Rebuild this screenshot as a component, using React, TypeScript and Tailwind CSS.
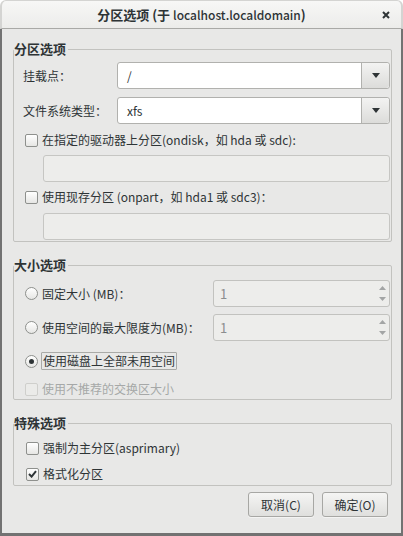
import React from 'react';

const ink = 'text-[#2e3436]';

function Check({ checked = false, disabled = false }: { checked?: boolean; disabled?: boolean }) {
  return (
    <span
      className={`w-[13px] h-[13px] rounded-[2px] border flex items-center justify-center shrink-0 ${
        disabled ? 'border-[#cfcfcc] bg-[#ebebe9]' : 'border-[#8e908d] bg-linear-to-b from-white to-[#e6e6e4]'
      }`}
    >
      {checked && (
        <svg width="9" height="8" viewBox="0 0 9 8">
          <path d="M1 4 L3.6 6.6 L8 1.2" stroke="#2e3436" strokeWidth="2" fill="none" />
        </svg>
      )}
    </span>
  );
}

function Radio({ checked = false }: { checked?: boolean }) {
  return (
    <span className="w-[13px] h-[13px] rounded-full border border-[#8e908d] bg-linear-to-b from-white to-[#e6e6e4] flex items-center justify-center shrink-0">
      {checked && <span className="w-[5px] h-[5px] rounded-full bg-[#2e3436]" />}
    </span>
  );
}

function Combo({ value }: { value: string }) {
  return (
    <div className="flex h-[27px] w-[273px] border border-[#b1b1ae] rounded-[3px] bg-white">
      <div className="flex-1 flex items-center pl-[9px] text-[12px]">{value}</div>
      <div className="w-[28px] border-l border-[#b1b1ae] rounded-r-[3px] bg-linear-to-b from-[#f3f3f2] to-[#dcdcda] flex items-center justify-center">
        <svg width="8" height="5" viewBox="0 0 8 5">
          <path d="M0 0 H8 L4 5 Z" fill="#2e3436" />
        </svg>
      </div>
    </div>
  );
}

function Spin() {
  return (
    <div className="flex h-[27px] w-[177px] border border-[#c2c2bf] rounded-[3px] bg-[#ededeb]">
      <div className="flex-1 flex items-center pl-[6px] text-[13px] text-[#8b8e8f]">1</div>
      <div className="w-[14px] flex flex-col items-center justify-between py-[5px]">
        <svg width="7" height="4" viewBox="0 0 7 4">
          <path d="M0 4 H7 L3.5 0 Z" fill="#a3a5a5" />
        </svg>
        <svg width="7" height="4" viewBox="0 0 7 4">
          <path d="M0 0 H7 L3.5 4 Z" fill="#a3a5a5" />
        </svg>
      </div>
    </div>
  );
}

function Section({ title, children }: { title: string; children: React.ReactNode }) {
  return (
    <fieldset className="border border-[#c2c2bf] rounded-[2px] pr-[1px]">
      <legend className="font-bold text-[13px] leading-[18px] pr-[2px]">{title}</legend>
      {children}
    </fieldset>
  );
}

export default function App() {
  return (
    <div className={`w-[403px] h-[536px] bg-white font-['Noto_Sans_CJK_SC','Noto_Sans',sans-serif] ${ink}`}>
      {/* Title bar */}
      <div className="h-[29px] rounded-t-[6px] border-x-2 border-t border-[#d4d4d2] border-b border-b-[#a9a9a6] bg-linear-to-b from-[#f7f7f6] to-[#ececea] flex items-center justify-center relative">
        <span className="text-[13px] font-bold">
          分区选项 (于 <span className="font-medium text-[12px]">localhost.localdomain</span>)
        </span>
        <svg className="absolute right-[11px] top-[10px]" width="8" height="8" viewBox="0 0 8 8">
          <path d="M1 1 L7 7 M7 1 L1 7" stroke="#2e3436" strokeWidth="2" />
        </svg>
      </div>

      {/* Body */}
      <div className="h-[507px] bg-[#e8e8e7] border-x-2 border-b-[3px] border-[#727272] pl-[11px] pr-[9px] pt-[11px] flex flex-col text-[12px]">
        <Section title="分区选项">
          <div className="flex items-center mt-[4px] pl-[9px]">
            <span className="w-[94px]">挂载点：</span>
            <Combo value="/" />
          </div>
          <div className="flex items-center mt-[8px] pl-[9px]">
            <span className="w-[94px]">文件系统类型：</span>
            <Combo value="xfs" />
          </div>
          <div className="flex items-center gap-[4px] h-[24px] mt-[4px] pl-[11px]">
            <Check />
            <span>在指定的驱动器上分区(ondisk，如 hda 或 sdc):</span>
          </div>
          <div className="ml-[29px] mt-[3px] h-[27px] border border-[#c6c6c3] rounded-[3px] bg-[#ededeb]" />
          <div className="flex items-center gap-[4px] h-[24px] mt-[3px] pl-[11px]">
            <Check />
            <span>使用现存分区 (onpart，如 hda1 或 sdc3)：</span>
          </div>
          <div className="ml-[29px] mt-[4px] mb-[1px] h-[27px] border border-[#c6c6c3] rounded-[3px] bg-[#ededeb]" />
        </Section>

        <div className="mt-[14px]">
          <Section title="大小选项">
            <div className="flex items-center justify-between mt-[6px] pl-[11px]">
              <div className="flex items-center gap-[4px]">
                <Radio />
                <span>固定大小 (MB)：</span>
              </div>
              <Spin />
            </div>
            <div className="flex items-center justify-between mt-[7px] pl-[11px]">
              <div className="flex items-center gap-[4px]">
                <Radio />
                <span>使用空间的最大限度为(MB)：</span>
              </div>
              <Spin />
            </div>
            <div className="flex items-center gap-[3px] h-[24px] mt-[8px] pl-[11px]">
              <Radio checked />
              <span className="border border-[#a9aaa7] rounded-[1px] px-[1px] leading-[16px]">使用磁盘上全部未用空间</span>
            </div>
            <div className="flex items-center gap-[4px] h-[20px] mt-[6px] pl-[11px] text-[#a6a8a8]">
              <Check disabled />
              <span>使用不推荐的交换区大小</span>
            </div>
          </Section>
        </div>

        <div className="mt-[14px]">
          <Section title="特殊选项">
            <div className="flex items-center gap-[4px] h-[24px] mt-[4px] pl-[12px]">
              <Check />
              <span>强制为主分区(asprimary)</span>
            </div>
            <div className="flex items-center gap-[4px] h-[22px] mt-[3px] pl-[12px]">
              <Check checked />
              <span>格式化分区</span>
            </div>
          </Section>
        </div>

        <div className="flex justify-end gap-[8px] mt-[6px] pr-[4px]">
          <button className="w-[66px] h-[25px] border border-[#a7a7a4] rounded-[3px] bg-linear-to-b from-[#f5f5f4] to-[#dfdfdd] shadow-[0_1px_0_#ffffff80] text-[12px]">
            取消(C)
          </button>
          <button className="w-[66px] h-[25px] border border-[#a7a7a4] rounded-[3px] bg-linear-to-b from-[#f5f5f4] to-[#dfdfdd] shadow-[0_1px_0_#ffffff80] text-[12px]">
            确定(O)
          </button>
        </div>
      </div>
    </div>
  );
}
